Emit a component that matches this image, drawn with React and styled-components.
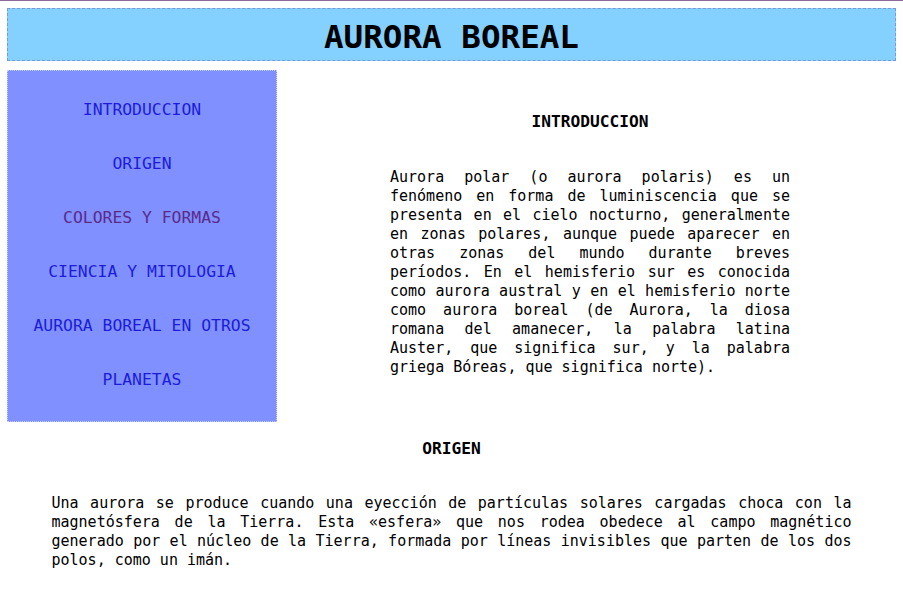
import React from 'react'
import styled, { createGlobalStyle } from 'styled-components'

const GlobalStyle = createGlobalStyle`
  html, body {
    margin: 0;
    background: #fff;
  }
  body {
    border-top: 1px solid #8c6c9c;
    padding: 7px 7px 20px;
    font-family: "DejaVu Sans Mono", "Liberation Mono", monospace;
    color: #000;
  }
`

const Header = styled.header`
  height: 51px;
  background: #84d0ff;
  border: 1px dashed #7a9bd2;
  text-align: center;
`

const Title = styled.h1`
  margin: 0;
  padding-top: 3px;
  font-size: 32.6px;
  line-height: 51px;
  font-weight: bold;
`

const Row = styled.div`
  display: flex;
  margin-top: 9px;
`

const Sidebar = styled.nav`
  flex-shrink: 0;
  width: 228px;
  height: 338px;
  padding: 12px 20px 0;
  background: #8090ff;
  border: 1px dotted #c8d0ff;
  text-align: center;
`

const NavLink = styled.a`
  display: block;
  font-size: 16.4px;
  line-height: 54px;
  color: ${p => (p.visited ? '#5a2a8c' : '#1c1cd8')};
  text-decoration: none;
`

const Main = styled.section`
  flex: 1;
  padding-left: ${p => p.inset || 0}px;
  text-align: center;
`

const Heading = styled.h2`
  margin: ${p => p.top}px 0 0;
  font-size: 16.2px;
  line-height: 19px;
  font-weight: bold;
`

const Paragraph = styled.p`
  width: ${p => p.width}px;
  margin: ${p => p.gap}px auto 0;
  font-size: 15px;
  line-height: 19px;
  text-align: justify;
`

const links = [
  { label: 'INTRODUCCION' },
  { label: 'ORIGEN' },
  { label: 'COLORES Y FORMAS', visited: true },
  { label: 'CIENCIA Y MITOLOGIA' },
  { label: 'AURORA BOREAL EN OTROS PLANETAS' },
]

export default function App() {
  return (
    <>
      <GlobalStyle />
      <Header>
        <Title>AURORA BOREAL</Title>
      </Header>
      <Row>
        <Sidebar>
          {links.map(l => (
            <NavLink key={l.label} href="#" visited={l.visited ? 1 : 0}>
              {l.label}
            </NavLink>
          ))}
        </Sidebar>
        <Main inset={7}>
          <Heading top={42}>INTRODUCCION</Heading>
          <Paragraph width={400} gap={37}>
            Aurora polar (o aurora polaris) es un fenómeno en forma de luminiscencia que se
            presenta en el cielo nocturno, generalmente en zonas polares, aunque puede aparecer
            en otras zonas del mundo durante breves períodos. En el hemisferio sur es conocida
            como aurora austral y en el hemisferio norte como aurora boreal (de Aurora, la diosa
            romana del amanecer, la palabra latina Auster, que significa sur, y la palabra
            griega Bóreas, que significa norte).
          </Paragraph>
        </Main>
      </Row>
      <Main>
        <Heading top={17}>ORIGEN</Heading>
        <Paragraph width={800} gap={36}>
          Una aurora se produce cuando una eyección de partículas solares cargadas choca con la
          magnetósfera de la Tierra. Esta «esfera» que nos rodea obedece al campo magnético
          generado por el núcleo de la Tierra, formada por líneas invisibles que parten de los
          dos polos, como un imán.
        </Paragraph>
      </Main>
    </>
  )
}
